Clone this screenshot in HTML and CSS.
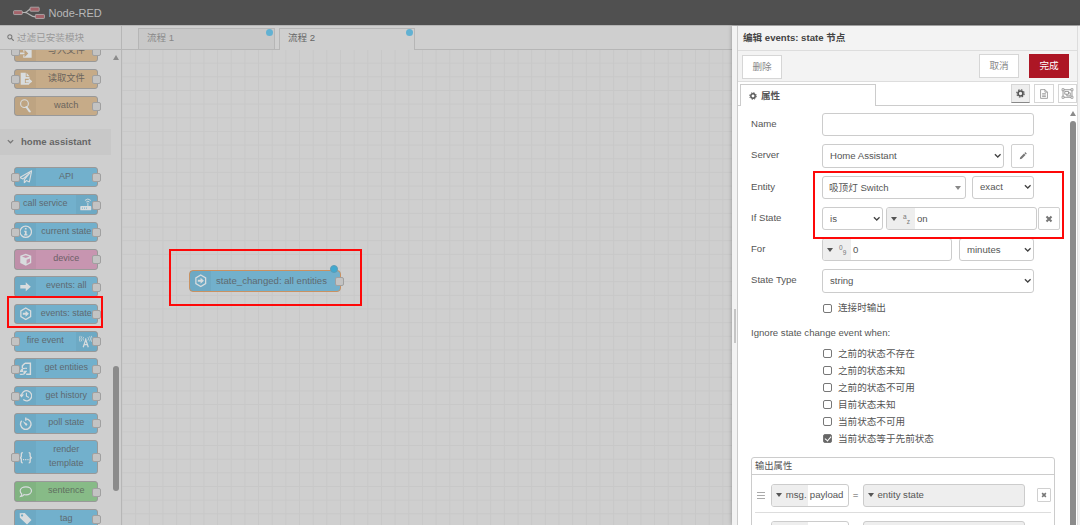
FILE: index.html
```
<!DOCTYPE html>
<html lang="zh-CN">
<head>
    <meta charset="UTF-8">
    <meta name="viewport" content="width=device-width, initial-scale=1.0">
    <title>Node-RED</title>
    <link rel="stylesheet" href="styles.css">
</head>
<body>

    <!-- icon set -->
    <svg class="defs" width="0" height="0">
        <symbol id="i-hex" viewBox="0 0 16 16"><path d="M8 1.2l5.8 3.4v6.8L8 14.8l-5.8-3.4V4.600z" fill="none" stroke="currentColor" stroke-width="1.5"/><path d="M4.500 6.800h3.300V4.500L11.800 8l-4 3.500V9.200H4.500z" fill="currentColor"/></symbol>
        <symbol id="i-arrow" viewBox="0 0 16 16"><path d="M1.500 6h6.500V2.800L14 8l-6 5.200V10H1.500z" fill="currentColor"/></symbol>
        <symbol id="i-plane" viewBox="0 0 16 16"><path d="M15 1L1 9l3.600 1.600L13 3.500 6.300 11.400v3.800l2.300-2.700 3.700 1.600z" fill="none" stroke="currentColor" stroke-width="1.300" stroke-linejoin="round"/></symbol>
        <symbol id="i-router" viewBox="0 0 16 16"><path d="M2.500 9.500h11a1 1 0 0 1 1 1v3a1 1 0 0 1-1 1h-11a1 1 0 0 1-1-1v-3a1 1 0 0 1 1-1z" fill="currentColor"/><path d="M10.500 10V5.500M8.600 4.800a2.600 2.600 0 0 1 3.800 0M7 2.900a5 5 0 0 1 7 0" fill="none" stroke="currentColor" stroke-width="1.100"/><path d="M3.500 12h1M6 12h1M8.500 12h1" stroke="#72b0cc" stroke-width="1.200"/></symbol>
        <symbol id="i-info" viewBox="0 0 16 16"><circle cx="8" cy="8" r="6.800" fill="none" stroke="currentColor" stroke-width="1.500"/><path d="M7 3.500h2v1.900H7zM6 6.800h3v4.200h1v1.300H6V11h1V8.100H6z" fill="currentColor"/></symbol>
        <symbol id="i-cube" viewBox="0 0 16 16"><path d="M8 .8l6.500 2.500v8.500L8 15.200l-6.500-3.400V3.300z" fill="currentColor"/><path d="M3.500 4.200L8 6l4.500-1.800L8 2.600zM9 8v5l4-2.200V6.400z" fill="#c795b0"/></symbol>
        <symbol id="i-tower" viewBox="0 0 16 16"><path d="M5 14.500L8 5.500l3 9M6.500 11.500h3M8 4v3" fill="none" stroke="currentColor" stroke-width="1.500"/><path d="M5.500 2.500a3 3 0 0 0 0 4M10.500 2.500a3 3 0 0 1 0 4M3.400 1.500a5 5 0 0 0 0 6M12.600 1.500a5 5 0 0 1 0 6M1.300 1a7 7 0 0 0 0 7M14.700 1a7 7 0 0 1 0 7" fill="none" stroke="currentColor" stroke-width=".9"/></symbol>
        <symbol id="i-entities" viewBox="0 0 16 16"><path d="M7 1.500h6.500v13H8.500M7 1.500L4 4.500V7" fill="none" stroke="currentColor" stroke-width="1.700"/><path d="M9.500 7.500C5 7 2.500 8.500 2 11M4 7.500v3.700H1M1 14.500c4 .5 6.500-1 7-3.500M6 14v-3h3.500" fill="none" stroke="currentColor" stroke-width="1.400"/></symbol>
        <symbol id="i-history" viewBox="0 0 16 16"><path d="M3 8a6 6 0 1 1 2 4.500" fill="none" stroke="currentColor" stroke-width="1.500"/><path d="M0 6.500h6L3 10z" fill="currentColor"/><path d="M8.800 4.500V8.500l3 1.600" fill="none" stroke="currentColor" stroke-width="1.300"/></symbol>
        <symbol id="i-timer" viewBox="0 0 16 16"><path d="M8 .5v4M8 2.200A6.200 6.200 0 1 1 3.200 4.500" fill="none" stroke="currentColor" stroke-width="1.600"/><path d="M4.300 4.800l5 3a1.300 1.300 0 1 1-1.800 1.800z" fill="currentColor"/></symbol>
        <symbol id="i-braces" viewBox="0 0 16 16"><path d="M4.500 2C2.500 2 2.800 3.500 2.800 5.500S2.500 8 .8 8c1.700 0 2 .5 2 2.500S2.500 14 4.500 14M11.500 2c2 0 1.700 1.500 1.700 3.500s.3 2.500 2 2.500c-1.700 0-2 .5-2 2.500s.3 3.500-1.700 3.500" fill="none" stroke="currentColor" stroke-width="1.600"/><path d="M4.700 9.500h1.400v1.400H4.700zM7.300 9.500h1.400v1.400H7.300zM9.900 9.500h1.400v1.400H9.900z" fill="currentColor"/></symbol>
        <symbol id="i-bubble" viewBox="0 0 16 16"><path d="M8.200 2.200c3.800 0 6.600 2 6.600 4.700s-2.800 4.700-6.600 4.700c-.8 0-1.500-.1-2.200-.3-1 1.200-2.200 2-4 2.300.9-1 1.300-1.900 1.300-3C2 9.700 1.400 8.400 1.400 6.900c0-2.700 3-4.700 6.800-4.700z" fill="none" stroke="currentColor" stroke-width="1.400"/></symbol>
        <symbol id="i-tag" viewBox="0 0 16 16"><path d="M.8 1.500l6-.2 8 8.200-5.300 5.300L1 6.800zM3.600 2.800a1.300 1.300 0 1 0 .1 0z" fill="currentColor" fill-rule="evenodd"/></symbol>
        <symbol id="i-lens" viewBox="0 0 16 16"><circle cx="6.500" cy="5.500" r="4.600" fill="none" stroke="currentColor" stroke-width="1.300"/><path d="M8.800 9.500l4 5.500" stroke="currentColor" stroke-width="2.400" stroke-linecap="round"/></symbol>
        <symbol id="i-filein" viewBox="0 0 16 16"><path d="M5 1h6l4 4v10H5v-3h1.500v2.500L11 10 6.500 5.500V8H5z" fill="currentColor"/><path d="M.5 9h6v2h-6z" fill="currentColor"/></symbol>
        <symbol id="i-fileout" viewBox="0 0 16 16"><path d="M2 1h6v5h4.500v2H7v5h5v2H2z" fill="currentColor"/><path d="M9 1l3.500 4H9zM8 9.500h3.500V7.500L16 11l-4.500 3.500v-2H8z" fill="currentColor"/></symbol>
        <symbol id="i-search" viewBox="0 0 16 16"><circle cx="6.500" cy="6.500" r="4.700" fill="none" stroke="currentColor" stroke-width="2.300"/><path d="M10 10l4.500 4.500" stroke="currentColor" stroke-width="2.800" stroke-linecap="round"/></symbol>
        <symbol id="i-cog" viewBox="0 0 16 16"><circle cx="8" cy="8" r="4.400" fill="none" stroke="currentColor" stroke-width="2.900"/><circle cx="8" cy="8" r="6.600" fill="none" stroke="currentColor" stroke-width="2" stroke-dasharray="2.700 2.484"/></symbol>
        <symbol id="i-doc" viewBox="0 0 16 16"><path d="M2.500 1h7l4 4v10h-11zM9.500 1v4h4M5 7.500h6M5 9.800h6M5 12.100h6" fill="none" stroke="currentColor" stroke-width="1.200"/></symbol>
        <symbol id="i-group" viewBox="0 0 18 16"><path d="M2.500 2.500h13v11h-13z" fill="none" stroke="currentColor" stroke-width="1.200"/><path d="M5 5h5.500v4H5zM10.500 7H13v4.500H8V9" fill="none" stroke="currentColor" stroke-width="1.200"/><path d="M1 1h3v3H1zM14 1h3v3h-3zM1 12h3v3H1zM14 12h3v3h-3z" fill="#fff" stroke="currentColor" stroke-width="1"/></symbol>
        <symbol id="i-pencil" viewBox="0 0 16 16"><path d="M1.500 14.500l1-4L10 3l3 3-7.500 7.500zM10.800 2.200l1.200-1.200c.5-.5 1-.5 1.500 0L15 2.500c.5.500.5 1 0 1.500l-1.200 1.200z" fill="currentColor"/></symbol>
        <symbol id="i-times" viewBox="0 0 16 16"><path d="M3 3l10 10M13 3L3 13" stroke="currentColor" stroke-width="4.200"/></symbol>
        <symbol id="i-chevron" viewBox="0 0 10 10"><path d="M1.200 3l3.800 3.800L8.800 3" fill="none" stroke="currentColor" stroke-width="1.800"/></symbol>
    </svg>

    <header class="header">
        <svg class="logo" viewBox="0 0 34 14">
            <path d="M9 6.500h3c4 0 3-4 8-4M12 6.500c5 0 5 4.500 12 4.500" fill="none" stroke="#b5b5b5" stroke-width="1.200"/>
            <g fill="#a4636a" stroke="#b5b5b5" stroke-width=".8">
                <rect x=".6" y="4.600" width="9" height="4" rx=".8"/>
                <rect x="17.600" y="1" width="9.400" height="4.200" rx=".8"/>
                <rect x="23" y="8.500" width="9.400" height="4.200" rx=".8"/>
            </g>
        </svg>
        <span>Node-RED</span>
    </header>

    <div class="main">
        <aside class="palette">
            <div class="palette-search">
                <svg><use href="#i-search"/></svg>
                <span>过滤已安装模块</span>
            </div>
            <div class="palette-body">
                <div class="palette-list">
                    <div class="group group-storage">
                        <div class="node tan in out"><i><svg><use href="#i-filein"/></svg></i><span>写入文件</span></div>
                        <div class="node tan in out"><i><svg><use href="#i-fileout"/></svg></i><span>读取文件</span></div>
                        <div class="node tan out"><i><svg><use href="#i-lens"/></svg></i><span>watch</span></div>
                    </div>
                    <div class="category"><svg><use href="#i-chevron"/></svg>home assistant</div>
                    <div class="group">
                        <div class="node in out"><i><svg><use href="#i-plane"/></svg></i><span>API</span></div>
                        <div class="node in out right"><i><svg><use href="#i-router"/></svg></i><span>call service</span></div>
                        <div class="node in out"><i><svg><use href="#i-info"/></svg></i><span>current state</span></div>
                        <div class="node pink out"><i><svg><use href="#i-cube"/></svg></i><span>device</span></div>
                        <div class="node out"><i><svg><use href="#i-arrow"/></svg></i><span>events: all</span></div>
                        <div class="node out"><i><svg><use href="#i-hex"/></svg></i><span>events: state</span></div>
                        <div class="node in out right"><i><svg><use href="#i-tower"/></svg></i><span>fire event</span></div>
                        <div class="node in out"><i><svg><use href="#i-entities"/></svg></i><span>get entities</span></div>
                        <div class="node in out"><i><svg><use href="#i-history"/></svg></i><span>get history</span></div>
                        <div class="node out"><i><svg><use href="#i-timer"/></svg></i><span>poll state</span></div>
                        <div class="node tall in out"><i><svg><use href="#i-braces"/></svg></i><span>render<br>template</span></div>
                        <div class="node green out"><i><svg><use href="#i-bubble"/></svg></i><span>sentence</span></div>
                        <div class="node out"><i><svg><use href="#i-tag"/></svg></i><span>tag</span></div>
                    </div>
                </div>
                <div class="scrollbar"><div class="scroll-up"></div><div class="thumb"></div></div>
            </div>
        </aside>

        <main class="workspace">
            <div class="flow-tabs">
                <div class="flow-tab">流程 1<b class="dot"></b></div>
                <div class="flow-tab active">流程 2<b class="dot"></b></div>
            </div>
            <div class="canvas">
                <div class="node flow-node out"><i><svg><use href="#i-hex"/></svg></i><span>state_changed: all entities</span><b class="dot"></b></div>
            </div>
        </main>

        <section class="tray">
            <div class="tray-handle"><div></div></div>
            <div class="tray-content">
                <div class="tray-title">编辑 events: state 节点</div>
                <div class="tray-toolbar">
                    <button>删除</button>
                    <button class="cancel">取消</button>
                    <button class="primary">完成</button>
                </div>
                <div class="tray-tabs">
                    <div class="tray-tab"><svg><use href="#i-cog"/></svg>属性</div>
                    <div class="tab-icons">
                        <button class="active"><svg><use href="#i-cog"/></svg></button>
                        <button><svg><use href="#i-doc"/></svg></button>
                        <button><svg class="wide"><use href="#i-group"/></svg></button>
                    </div>
                </div>
                <div class="tray-body">
                    <form class="form">
                        <div class="row"><label>Name</label><input class="field w-full" type="text"></div>
                        <div class="row">
                            <label>Server</label>
                            <div class="field select w-server">Home Assistant<svg><use href="#i-chevron"/></svg></div>
                            <div class="icon-btn edit"><svg><use href="#i-pencil"/></svg></div>
                        </div>
                        <div class="row">
                            <label>Entity</label>
                            <div class="field select entity w-entity">吸顶灯 Switch<b class="caret small"></b></div>
                            <div class="field select w-match">exact<svg><use href="#i-chevron"/></svg></div>
                        </div>
                        <div class="row">
                            <label>If State</label>
                            <div class="field select w-is">is<svg><use href="#i-chevron"/></svg></div>
                            <div class="field typed w-state"><div class="type"><b class="caret"></b><sup>a</sup><sub>z</sub></div><span>on</span></div>
                            <div class="icon-btn clear"><svg><use href="#i-times"/></svg></div>
                        </div>
                        <div class="row">
                            <label>For</label>
                            <div class="field typed w-for"><div class="type"><b class="caret"></b><sup>0</sup><sub>9</sub></div><span>0</span></div>
                            <div class="field select w-unit">minutes<svg><use href="#i-chevron"/></svg></div>
                        </div>
                        <div class="row"><label>State Type</label><div class="field select w-full">string<svg><use href="#i-chevron"/></svg></div></div>

                        <div class="checks first">
                            <label><input type="checkbox">连接时输出</label>
                        </div>
                        <p class="ignore">Ignore state change event when:</p>
                        <div class="checks">
                            <label><input type="checkbox">之前的状态不存在</label>
                            <label><input type="checkbox">之前的状态未知</label>
                            <label><input type="checkbox">之前的状态不可用</label>
                            <label><input type="checkbox">目前状态未知</label>
                            <label><input type="checkbox">当前状态不可用</label>
                            <label><input type="checkbox" checked>当前状态等于先前状态</label>
                        </div>

                        <div class="outputs">
                            <div class="outputs-title">输出属性</div>
                            <div class="output">
                                <div class="grip"></div>
                                <div class="field typed w-msg"><div class="type"><b class="caret"></b>msg.</div><span>payload</span></div>
                                <span class="eq">=</span>
                                <div class="field value"><b class="caret"></b>entity state</div>
                                <div class="icon-btn remove"><svg><use href="#i-times"/></svg></div>
                            </div>
                            <div class="output">
                                <div class="grip"></div>
                                <div class="field typed w-msg"><div class="type"><b class="caret"></b></div></div>
                                <span class="eq"></span>
                                <div class="field value"><b class="caret"></b></div>
                                <div class="icon-btn remove"><svg><use href="#i-times"/></svg></div>
                            </div>
                        </div>
                    </form>
                    <div class="scrollbar"><div class="scroll-up"></div><div class="thumb"></div></div>
                </div>
            </div>
        </section>
    </div>

    <!-- highlight frames over the editor -->
    <div class="mark mark-palette"></div>
    <div class="mark mark-node"></div>
    <div class="mark mark-entity"></div>

</body>
</html>
```
FILE: styles.css
```
* {
    box-sizing: border-box;
}
body {
    margin: 0;
    width: 1080px;
    height: 525px;
    overflow: hidden;
    position: relative;
    display: flex;
    flex-direction: column;
    font-family: "Liberation Sans", "Noto Sans CJK SC", sans-serif;
    font-size: 9.6px;
    line-height: 14px;
    color: #555;
    background: #cfcfcf;
}
.defs {
    position: absolute;
}
svg {
    display: block;
    flex: none;
    width: 9px;
    height: 9px;
}
button {
    font: inherit;
    color: #888;
    padding: 0;
    background: #fff;
    border: 1px solid #d6d6d6;
    display: flex;
    align-items: center;
    justify-content: center;
}

/* header */
.header {
    height: 25px;
    flex: none;
    background: #505050;
    color: #b8b8b8;
    display: flex;
    align-items: center;
    gap: 3px;
    padding-left: 12.5px;
    font-size: 11px;
}
.header .logo {
    width: 33px;
    height: 14px;
}
.main {
    flex: 1;
    min-height: 0;
    display: flex;
    border-top: 1px solid #b5b5b5;
}

/* palette */
.palette {
    width: 122px;
    flex: none;
    display: flex;
    flex-direction: column;
    border-right: 1px solid #b6b6b6;
}
.palette-search {
    height: 24px;
    flex: none;
    border-bottom: 1px solid #b6b6b6;
    display: flex;
    align-items: center;
    gap: 3px;
    padding-left: 7px;
    color: #999;
}
.palette-search svg {
    width: 7px;
    height: 7px;
    color: #777;
}
.palette-body {
    flex: 1;
    min-height: 0;
    display: flex;
    overflow: hidden;
}
.palette-list {
    width: 111px;
}
.group {
    display: flex;
    flex-direction: column;
    gap: 6.850px;
    padding: 12px 0 0 14px;
}
.group .node {
    font-size: 9px;
}
.group .node.tan {
    font-size: 9.300px;
}
.group-storage {
    padding-top: 0;
    margin-top: -8.800px;
    margin-bottom: 12.600px;
}
.category {
    height: 26px;
    background: #c8c8c8;
    font-weight: bold;
    color: #666;
    display: flex;
    align-items: center;
    gap: 7px;
    padding-left: 7px;
}
.category svg {
    width: 7px;
    height: 7px;
    color: #777;
}
.node {
    position: relative;
    width: 83.500px;
    height: 20.500px;
    flex: none;
    display: flex;
    background: #72b0cc;
    border: 1px solid #999;
    border-radius: 3px;
    color: #5f6a70;
}
.node i {
    width: 21px;
    flex: none;
    display: flex;
    align-items: center;
    justify-content: center;
    background: rgba(0, 0, 0, 0.04);
    color: #d8dcde;
}
.node i svg {
    width: 13.500px;
    height: 13.500px;
}
.node > span {
    flex: 1;
    align-self: center;
    text-align: center;
    line-height: 13.600px;
    padding-bottom: 1px;
}
.node.right {
    flex-direction: row-reverse;
}
.node.tall {
    height: 34px;
}
.node.tan {
    background: #c6ab88;
    color: #6b655d;
}
.node.pink {
    background: #c795b0;
    color: #6d5f67;
}
.node.green {
    background: #87bb87;
    color: #5f6f5f;
}
/* ports sit on the node border */
.node.in::before,
.node.out::after {
    content: "";
    position: absolute;
    top: calc(50% - 4px);
    width: 7px;
    height: 7px;
    background: #c3c3c3;
    border: 1px solid #a0a0a0;
    border-radius: 2px;
}
.node.in::before {
    left: -4px;
}
.node.out::after {
    right: -4px;
}

/* scrollbars */
.scroll-up {
    width: 0;
    border: 3.300px solid transparent;
    border-top: 0;
    border-bottom: 5px solid #8b8b8b;
}
.scrollbar .thumb {
    width: 6px;
    border-radius: 3px;
    background: #8b8b8b;
}
.palette .scrollbar {
    padding: 5px 0 0 2px;
}
.palette .thumb {
    height: 125px;
    margin-top: 306px;
}

/* workspace */
.workspace {
    width: 610px;
    flex: none;
    display: flex;
    flex-direction: column;
}
.flow-tabs {
    height: 24px;
    flex: none;
    display: flex;
    gap: 4px;
    padding: 2px 0 0 16px;
    border-bottom: 1px solid #b6b6b6;
}
.flow-tab {
    position: relative;
    width: 137px;
    height: 21px;
    padding: 2px 8px;
    background: #c8c8c8;
    border: 1px solid #b6b6b6;
    border-bottom: 0;
    color: #888;
}
.flow-tab.active {
    height: 22px;
    width: 136px;
    background: #cfcfcf;
    color: #666;
}
.dot {
    position: absolute;
    width: 7px;
    height: 7px;
    border-radius: 50%;
    background: #62b1d2;
}
.flow-tab .dot {
    top: 0;
    right: 1px;
}
.canvas {
    flex: 1;
    position: relative;
    background-color: #cfcfcf;
    background-image: linear-gradient(to right, #c8c8c8 1px, transparent 1px), linear-gradient(#c8c8c8 1px, transparent 1px);
    background-size: 13.670px 13.670px;
    background-position: -0.500px -1px;
}
.flow-node {
    position: absolute;
    left: 67px;
    top: 220px;
    width: 152px;
    height: 22px;
    border: 1.400px solid #ca9161;
    border-radius: 4px;
}
.flow-node > span {
    text-align: left;
    padding-left: 5px;
}
.flow-node .dot {
    top: -6px;
    right: 2px;
    width: 8px;
    height: 8px;
    background: #40a9d0;
    border: 1px solid #5d9db7;
}

/* edit tray */
.tray {
    flex: 1;
    display: flex;
    min-width: 0;
    background: #f3f3f3;
    box-shadow: 0 0 4px rgba(0, 0, 0, 0.3);
    z-index: 1;
}
.tray-handle {
    width: 6px;
    flex: none;
    display: flex;
    align-items: center;
    border-right: 1px solid #ccc;
}
.tray-handle div {
    width: 2px;
    height: 34px;
    margin: 100px 0 0 2px;
    background: #c5c5c5;
}
.tray-content {
    flex: 1;
    display: flex;
    flex-direction: column;
    min-width: 0;
    margin-right: 2px;
    border-right: 1px solid #ddd;
}
.tray-title {
    height: 25px;
    flex: none;
    padding: 5px 5px 0;
    font-weight: bold;
    color: #444;
    border-bottom: 1px solid #ddd;
}
.tray-toolbar {
    height: 31px;
    flex: none;
    display: flex;
    padding: 3px 8px 0 4px;
    border-bottom: 1px solid #ddd;
}
.tray-toolbar button {
    width: 40px;
    height: 24px;
    margin-top: 1px;
}
.tray-toolbar .cancel {
    margin-left: auto;
    margin-top: 0;
}
.tray-toolbar .primary {
    margin: 0 0 0 10px;
    background: #ad1625;
    border-color: #ad1625;
    color: #fff;
}
.tray-tabs {
    height: 24px;
    flex: none;
    display: flex;
    justify-content: space-between;
    align-items: flex-start;
    padding: 2px 0 0 2px;
    background: #fff;
    border-bottom: 1px solid #ccc;
}
.tray-tab {
    width: 136px;
    height: 22px;
    display: flex;
    align-items: center;
    gap: 4px;
    padding-left: 8px;
    background: #fff;
    border: 1px solid #ccc;
    border-bottom: 0;
    font-weight: bold;
    color: #555;
}
.tray-tab svg {
    width: 8px;
    height: 8px;
}
.tab-icons {
    display: flex;
    gap: 4px;
}
.tab-icons button {
    width: 19.500px;
    height: 19px;
}
.tab-icons button.active {
    background: #eee;
    border-bottom-color: #888;
    color: #555;
}
.tab-icons svg {
    width: 10px;
    height: 10px;
}
.tab-icons .active svg {
    width: 9px;
    height: 9px;
}
.tab-icons .wide {
    width: 13px;
    height: 11px;
}
.tray-body {
    flex: 1;
    min-height: 0;
    display: flex;
    justify-content: space-between;
    overflow: hidden;
    background: #fff;
}
.tray-body .scrollbar {
    padding-top: 5px;
    width: 7px;
}
.tray-body .thumb {
    height: 420px;
    margin-top: 5px;
}

/* form */
.form {
    width: 309px;
    flex: none;
    padding: 7px 0 0 13px;
}
.row {
    display: flex;
    margin-bottom: 8px;
    white-space: nowrap;
}
.row > label {
    width: 71px;
    flex: none;
    padding-top: 4px;
}
.field {
    height: 23.300px;
    flex: none;
    border: 1px solid #ccc;
    border-radius: 3px;
    background: #fff;
    display: flex;
    align-items: center;
}
.w-full { width: 212px; }
.w-server { width: 182px; }
.w-entity { width: 143.500px; margin-right: 6.500px; }
.w-match { width: 62px; }
.w-is { width: 61px; margin-right: 3px; }
.w-state { width: 151px; margin-right: 1px; }
.w-for { width: 130px; margin-right: 7px; }
.w-unit { width: 75px; }
.w-msg { width: 78px; }
.select {
    justify-content: space-between;
    padding: 0 2px 0 7px;
}
.select.entity {
    padding: 1px 4px 0 6px;
}
.select svg {
    width: 7.500px;
    height: 7.500px;
    color: #444;
}
.caret {
    width: 0;
    border: 3px solid transparent;
    border-top: 4px solid #555;
    border-bottom: 0;
    margin-right: 4px;
}
.caret.small {
    border-top-color: #888;
    margin: 0;
}
.typed .type {
    align-self: stretch;
    display: flex;
    align-items: center;
    width: 28px;
    padding-left: 4px;
    background: #eee;
    border-radius: 2px 0 0 2px;
}
.typed sup,
.typed sub {
    font-size: 6.500px;
    line-height: 7px;
    color: #777;
}
.typed sup {
    margin: 0 0 5px 2px;
}
.typed sub {
    margin-top: 5px;
}
.typed > span {
    padding-left: 2px;
}
.icon-btn {
    display: flex;
    align-items: center;
    justify-content: center;
    width: 22px;
    height: 23.300px;
    flex: none;
    border: 1px solid #d0d0d0;
    border-radius: 2px;
    color: #777;
}
.icon-btn svg {
    width: 8px;
    height: 8px;
}
.icon-btn.edit {
    width: 23px;
    margin-left: 7px;
}
.checks {
    padding-left: 71px;
}
.checks label {
    display: flex;
    align-items: center;
    height: 17px;
    gap: 6px;
}
.checks.first {
    margin-top: -1px;
}
.checks input {
    appearance: none;
    margin: 0 0 0 1px;
    width: 9px;
    height: 9px;
    border: 1px solid #777;
    border-radius: 2px;
    position: relative;
}
.checks input:checked {
    background: #666;
}
.checks input:checked::after {
    content: "";
    position: absolute;
    left: 2px;
    top: 0;
    width: 3px;
    height: 5px;
    border: solid #fff;
    border-width: 0 1.200px 1.200px 0;
    transform: rotate(40deg);
}
.ignore {
    margin: 9.500px 0 5px;
}

/* output properties list */
.outputs {
    width: 304px;
    margin-top: 9.500px;
    border: 1px solid #ccc;
    border-radius: 3px 3px 0 0;
}
.outputs-title {
    height: 17px;
    padding: 1px 3px;
    border-bottom: 1px solid #ccc;
    font-size: 9.300px;
}
.output {
    display: flex;
    align-items: center;
    height: 35px;
    margin: 0 3px;
    padding-top: 6px;
    border-bottom: 1px solid #ddd;
}
.outputs-title + .output {
    height: 38px;
    padding-top: 4px;
}
.grip {
    width: 8px;
    height: 7px;
    margin: 0 6px 0 2px;
    border: solid #aaa;
    border-width: 1px 0;
    background: linear-gradient(#aaa, #aaa) center / 100% 1px no-repeat;
}
.w-msg .type {
    width: 36px;
}
.eq {
    width: 14px;
    text-align: center;
}
.value {
    width: 162.500px;
    padding-left: 4px;
    background: #eee;
}
.remove {
    width: 14px;
    height: 14px;
    margin-left: 12px;
    border-radius: 1px;
}
.remove svg {
    width: 6px;
    height: 6px;
}

/* red frames */
.mark {
    position: absolute;
    z-index: 2;
    border: 2px solid #fe0808;
}
.mark-palette {
    left: 7px;
    top: 296px;
    width: 96px;
    height: 32px;
}
.mark-node {
    left: 169px;
    top: 249px;
    width: 193px;
    height: 57px;
}
.mark-entity {
    left: 813px;
    top: 171px;
    width: 251px;
    height: 68px;
}
```
